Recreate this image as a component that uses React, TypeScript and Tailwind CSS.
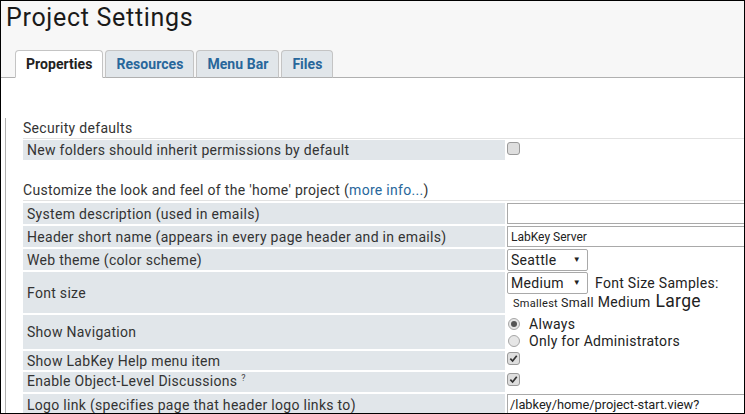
import type { ReactNode } from "react";

function Tab({ label, active }: { label: string; active?: boolean }) {
  return (
    <div
      className={`flex h-[28px] items-center rounded-t-[4px] border px-[10px] text-[14px] font-bold tracking-[0.05px] ${
        active
          ? "border-[#c4c4c4] border-b-white bg-white text-[#222]"
          : "border-[#c4c4c4] border-b-[#b0b0b0] bg-[#e1e6ea] text-[#28679b]"
      }`}
    >
      {label}
    </div>
  );
}

function Check({ checked }: { checked?: boolean }) {
  return (
    <span className="flex h-[13px] w-[13px] items-center justify-center rounded-[3px] border border-[#9a9a9a] bg-[#dedede]">
      {checked && (
        <svg viewBox="0 0 10 10" className="h-[9px] w-[9px]">
          <path d="M1.5 5.2 L4 7.8 L8.6 2" fill="none" stroke="#333" strokeWidth="1.9" />
        </svg>
      )}
    </span>
  );
}

function Radio({ checked }: { checked?: boolean }) {
  return (
    <span className="flex h-[12px] w-[12px] items-center justify-center rounded-full border border-[#a6a6a6] bg-[#e6e6e6]">
      {checked && <span className="h-[6px] w-[6px] rounded-full bg-[#555]" />}
    </span>
  );
}

function Select({ value }: { value: string }) {
  return (
    <div className="flex h-[22px] w-[81px] shrink-0 items-center justify-between rounded-[2px] border border-[#a9a9a9] bg-white pl-[3px] pr-[6px] text-[14px] text-[#222]">
      <span>{value}</span>
      <span className="text-[8px]">▼</span>
    </div>
  );
}

function Row({
  label,
  height,
  children,
  valueClass = "",
}: {
  label: ReactNode;
  height: string;
  children?: ReactNode;
  valueClass?: string;
}) {
  return (
    <div className={`flex gap-[2px] ${height}`}>
      <div className="flex w-[482px] shrink-0 items-center bg-[#e1e6ea] pl-[4px]">{label}</div>
      <div className={`flex-1 ${valueClass}`}>{children}</div>
    </div>
  );
}

export default function App() {
  return (
    <div className="h-[414px] w-[745px] overflow-hidden border border-black bg-white font-[Roboto,sans-serif] text-[14px] leading-[20px] tracking-[0.3px] text-[#333]">
      {/* page header + tabs */}
      <div className="flex h-[77px] flex-col border-b border-[#b0b0b0] bg-[#f7f7f7]">
        <h1 className="mt-[4px] pl-[5px] text-[25px] leading-none tracking-[0.7px] text-[#1a1a1a]">Project Settings</h1>
        <div className="relative -mb-px ml-[14px] mt-auto flex gap-[2px]">
          <Tab label="Properties" active />
          <Tab label="Resources" />
          <Tab label="Menu Bar" />
          <Tab label="Files" />
        </div>
      </div>

      <div className="ml-[4px] h-full border-l border-[#b0b0b0] pl-[17px]">
        <div className="w-[760px]">
          <div className="mt-[40px] h-[21px] border-b border-[#e2e2e2]">Security defaults</div>
          <div className="mt-[1px]">
            <Row label="New folders should inherit permissions by default" height="h-[20px]" valueClass="pt-[2px]">
              <Check />
            </Row>
          </div>

          <div className="mt-[20px] h-[21px] border-b border-[#e2e2e2]">
            Customize the look and feel of the 'home' project (
            <span className="text-[#28679b]">more info...</span>)
          </div>

          <div className="mt-[2px] flex flex-col gap-[2px]">
            <Row label="System description (used in emails)" height="h-[21px]">
              <div className="h-[21px] w-[260px] border border-[#a9a9a9] bg-white" />
            </Row>
            <Row label="Header short name (appears in every page header and in emails)" height="h-[21px]">
              <div className="flex h-[21px] w-[260px] items-center border border-[#a9a9a9] bg-white pl-[3px] text-[12px] tracking-normal text-[#222]">
                LabKey Server
              </div>
            </Row>
            <Row label="Web theme (color scheme)" height="h-[21px]">
              <Select value="Seattle" />
            </Row>
            <Row label="Font size" height="h-[41px]">
              <div className="flex items-center">
                <Select value="Medium" />
                <span className="ml-[7px] text-[#222]">Font Size Samples:</span>
              </div>
              <div className="flex items-baseline pl-[6px] leading-[14px] text-[#222]">
                <span className="text-[11px]">Smallest</span>
                <span className="ml-[3px] text-[12.5px]">Small</span>
                <span className="ml-[4px] text-[14px]">Medium</span>
                <span className="ml-[5px] text-[17.5px]">Large</span>
              </div>
            </Row>
            <Row label="Show Navigation" height="h-[34px]" valueClass="flex flex-col justify-center">
              <div className="flex h-[17px] items-center gap-[9px] pl-[1px] text-[#222]">
                <Radio checked />
                <span>Always</span>
              </div>
              <div className="flex h-[17px] items-center gap-[9px] pl-[1px] text-[#222]">
                <Radio />
                <span>Only for Administrators</span>
              </div>
            </Row>
            <Row label="Show LabKey Help menu item" height="h-[19px]" valueClass="pt-[1px]">
              <Check checked />
            </Row>
            <Row
              label={
                <span>
                  Enable Object-Level Discussions{" "}
                  <span className="relative -top-[5px] text-[9px] text-[#444]">?</span>
                </span>
              }
              height="h-[20px]"
              valueClass="pt-[1px]"
            >
              <Check checked />
            </Row>
            <Row label="Logo link (specifies page that header logo links to)" height="h-[21px]">
              <div className="flex h-[21px] w-[260px] items-center border border-[#a9a9a9] bg-white pl-[2px] text-[12.8px] tracking-normal text-[#222]">
                /labkey/home/project-start.view?
              </div>
            </Row>
          </div>
        </div>
      </div>
    </div>
  );
}
